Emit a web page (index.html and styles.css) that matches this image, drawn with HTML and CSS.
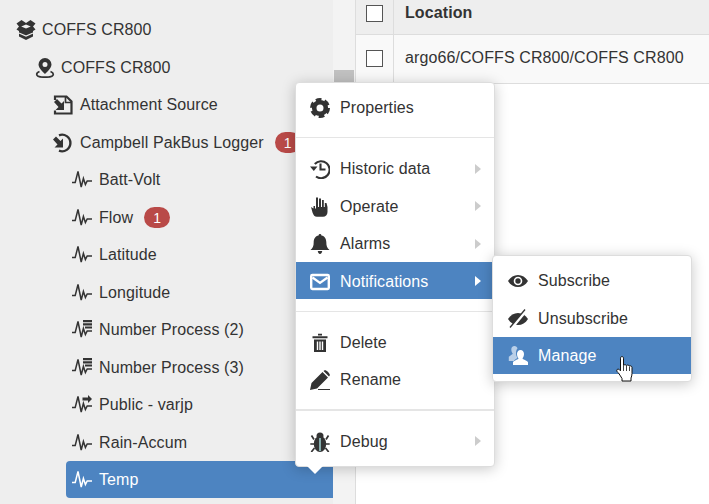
FILE: index.html
```html
<!DOCTYPE html>
<html lang="en">
<head>
<meta charset="utf-8">
<title>Tree</title>
<link rel="stylesheet" href="styles.css">
</head>
<body>
<svg class="defs" width="0" height="0" aria-hidden="true">
  <symbol id="pulse" viewBox="0 0 20 20"><path d="M0 12.500h3.200L6 1.500l3.200 15.500 2.200-8.500 2 6 1.800-3.500H20" fill="none" stroke="currentColor" stroke-width="1.500"/></symbol>
  <symbol id="pulse-list" viewBox="0 0 20 20"><path d="M0 12.500h3.200L6 1.500l3.200 15.500 2.200-8.500 2 6 1.800-3.500H20" fill="none" stroke="currentColor" stroke-width="1.500"/><path d="M11 0h9v2.200h-9zM11 3.200h9v2.200h-9zM13 6.400h7v2h-7z" fill="currentColor"/></symbol>
  <symbol id="pulse-arrow" viewBox="0 0 20 20"><path d="M0 12.500h3.200L6 1.500l3.200 15.500 2.200-8.500 2 6 1.800-3.500H20" fill="none" stroke="currentColor" stroke-width="1.500"/><path d="M10.500 2.500h5.500V0l4 4-4 4V5.500h-5.500z" fill="currentColor"/></symbol>
</svg>
<div class="page">
  <nav class="tree">
    <div class="row lvl0">
      <svg class="ic" viewBox="0 0 20 20"><path d="M10 3 5.500 0 .5 3.500l2.500 3-2.500 3L3 11v5.500l7 3.500 7-3.500V11l2.500-1.500-2.500-3 2.500-3-5-3.500zM10 4.500l4.800 2L10 8.500l-4.800-2z" fill="#333" fill-rule="evenodd"/><path d="M3 13 10 16l7-3" stroke="#eee" stroke-width="1.200" fill="none"/></svg>
      <span>COFFS CR800</span>
    </div>
    <div class="row lvl1">
      <svg class="ic" viewBox="0 0 20 20"><path d="M10 0a6.500 6.500 0 0 0-6.500 6.500c0 4 6.500 9.500 6.500 9.500s6.500-5.500 6.500-9.500A6.500 6.500 0 0 0 10 0zm0 4a2.500 2.500 0 1 1 0 5 2.500 2.500 0 0 1 0-5z" fill="#333" fill-rule="evenodd"/><path d="M4.500 13.500c-2 .8-2.800 1.600-2.800 2.700C1.700 18 5.400 19.200 10 19.200s8.300-1.200 8.300-3c0-1.100-.8-1.900-2.800-2.700" fill="none" stroke="#333" stroke-width="1.700"/></svg>
      <span>COFFS CR800</span>
    </div>
    <div class="row lvl2">
      <svg class="ic" viewBox="0 0 20 20"><path d="M2 5V1.500h11.500l5 5v12H2v-3" fill="none" stroke="#333" stroke-width="2.200"/><path d="M12.500 2v5.500H18" fill="none" stroke="#333" stroke-width="1.700"/><path d="M1 7 4 4l4.500 4.500L11 6v9H2.500L5.500 12z" fill="#333"/></svg>
      <span>Attachment Source</span>
    </div>
    <div class="row lvl2">
      <svg class="ic" viewBox="0 0 20 20"><path d="M6 2.300A8.300 8.300 0 1 1 6 17.700" fill="none" stroke="#333" stroke-width="2.400"/><path d="M0 6.500 3 3.500l4.500 4.500L10 5.500v9H1.500l3-3z" fill="#333"/></svg>
      <span>Campbell PakBus Logger</span>
      <b class="badge">1</b>
    </div>
    <div class="row lvl3"><svg class="ic"><use href="#pulse"/></svg><span>Batt-Volt</span></div>
    <div class="row lvl3"><svg class="ic"><use href="#pulse"/></svg><span>Flow</span><b class="badge">1</b></div>
    <div class="row lvl3"><svg class="ic"><use href="#pulse"/></svg><span>Latitude</span></div>
    <div class="row lvl3"><svg class="ic"><use href="#pulse"/></svg><span>Longitude</span></div>
    <div class="row lvl3"><svg class="ic"><use href="#pulse-list"/></svg><span>Number Process (2)</span></div>
    <div class="row lvl3"><svg class="ic"><use href="#pulse-list"/></svg><span>Number Process (3)</span></div>
    <div class="row lvl3"><svg class="ic"><use href="#pulse-arrow"/></svg><span>Public - varjp</span></div>
    <div class="row lvl3"><svg class="ic"><use href="#pulse"/></svg><span>Rain-Accum</span></div>
    <div class="row lvl3 selected"><svg class="ic"><use href="#pulse"/></svg><span>Temp</span></div>
  </nav>
  <div class="scrollbar"><div class="thumb"></div></div>
  <main class="content">
    <div class="tr head">
      <div class="cell check"><i class="box"></i></div>
      <div class="cell">Location</div>
    </div>
    <div class="tr body">
      <div class="cell check"><i class="box"></i></div>
      <div class="cell">argo66/COFFS CR800/COFFS CR800</div>
    </div>
  </main>
</div>

<div class="menu main-menu">
  <div class="item">
    <svg class="mi" viewBox="0 0 20 20"><circle cx="10" cy="10" r="5.800" fill="none" stroke="#333" stroke-width="4.600"/><circle cx="10" cy="10" r="8.400" fill="none" stroke="#333" stroke-width="3.200" stroke-dasharray="5.600 3.200"/></svg>
    <span>Properties</span>
  </div>
  <hr class="sep">
  <div class="item has-sub">
    <svg class="mi" viewBox="0 0 20 20"><path d="M4.800 5A8.500 8.500 0 1 1 6 17.500" fill="none" stroke="#333" stroke-width="2.100"/><path d="M0 7.500h7.500L3.800 12z" fill="#333"/><path d="M10.500 4.500v6h5" fill="none" stroke="#333" stroke-width="2.100"/></svg>
    <span>Historic data</span>
  </div>
  <div class="item has-sub">
    <svg class="mi" viewBox="0 0 20 20"><path d="M1 10l2.500 1.500V9h1.500v2.500h1V.5h2V10h1V1.500h2V10h1V3h1.800v7h1V6h1.700l1 4V15c0 3-2 4.800-4.500 4.800H7c-2.500 0-3.500-1.500-4.500-4.300z" fill="#333"/></svg>
    <span>Operate</span>
  </div>
  <div class="item has-sub">
    <svg class="mi" viewBox="0 0 20 20"><path d="M10 0c.8 0 1.400.6 1.400 1.400C14.800 2 16.300 5 16.300 8c0 4 .8 6 3.200 8H.5c2.400-2 3.200-4 3.200-8 0-3 1.500-6 4.900-6.600C8.600.6 9.200 0 10 0zM7.800 17h4.400c0 1.500-1 3-2.200 3S7.800 18.500 7.800 17z" fill="#333"/></svg>
    <span>Alarms</span>
  </div>
  <div class="item has-sub active">
    <svg class="mi" viewBox="0 0 20 20"><rect x="1.200" y="3" width="17.600" height="14" rx="1.200" fill="none" stroke="#fff" stroke-width="2.400"/><path d="M2.500 5.500 10 11l7.500-5.500" fill="none" stroke="#fff" stroke-width="2.200"/></svg>
    <span>Notifications</span>
  </div>
  <hr class="sep">
  <div class="item">
    <svg class="mi" viewBox="0 0 20 20"><path d="M2.500 3.300h15v1.900h-15zM8 .8h4v1.600H8zM4 6.500h12V19H4zM6.800 8.500v8.500h1.400V8.500zM9.300 8.500v8.500h1.400V8.500zM11.800 8.500v8.500h1.400V8.500z" fill="#333" fill-rule="evenodd"/></svg>
    <span>Delete</span>
  </div>
  <div class="item">
    <svg class="mi" viewBox="0 0 20 20"><path d="M0 20l1.500-7L12.500 2l5.500 5.500L7 18.500zM13.500 1 15 0c2 .5 4 2.500 5 5l-1 1.500z" fill="#333"/><path d="M8 19h12v1H8z" fill="#333"/></svg>
    <span>Rename</span>
  </div>
  <hr class="sep thick">
  <div class="item has-sub">
    <svg class="mi" viewBox="0 0 20 20"><ellipse cx="10" cy="12" rx="6.200" ry="8" fill="#333"/><circle cx="10" cy="4" r="3.500" fill="#333"/><path d="M10 6v13" stroke="#a8e0e0" stroke-width="1.400"/><path d="M4 7.500 1.500 3.500M16 7.500l2.500-4M4 12H.3M16 12h3.700M4.500 16 1.300 20M15.500 16l3.200 4" stroke="#333" stroke-width="1.700" fill="none"/></svg>
    <span>Debug</span>
  </div>
</div>
<div class="caret"></div>

<div class="menu sub-menu">
  <div class="item">
    <svg class="mi" viewBox="0 0 20 20"><path d="M0 10c2.500-4 6-6 10-6s7.500 2 10 6c-2.500 4-6 6-10 6s-7.500-2-10-6zm10-4.300a4.300 4.300 0 1 0 0 8.600 4.300 4.300 0 0 0 0-8.600z" fill="#333" fill-rule="evenodd"/><circle cx="10" cy="10" r="2.700" fill="#333"/></svg>
    <span>Subscribe</span>
  </div>
  <div class="item">
    <svg class="mi" viewBox="0 0 20 20"><path d="M0 10c2.500-4 6-6 10-6s7.500 2 10 6c-2.500 4-6 6-10 6s-7.500-2-10-6z" fill="#333"/><path d="M18.500 1 3.500 19" stroke="#fff" stroke-width="3"/><path d="M17 .5 2 18.500" stroke="#333" stroke-width="1.300"/></svg>
    <span>Unsubscribe</span>
  </div>
  <div class="item active">
    <svg class="mi" viewBox="0 0 20 20"><path d="M6.500 0C4.500 0 3.300 1.500 3.300 3.500c0 1.500.5 3 1.500 4C4.600 8.500 2 9.500.8 10.800V15h5c.8-1.500 2.700-2.300 3.700-3-1-1.500-1.500-3-1.500-5 0-2 .5-3.500 1.500-4.500C9.300 1 8 0 6.500 0z" fill="#b9cfe8"/><path d="M12.500 4c2.200 0 3.500 1.700 3.500 4 0 1.700-.7 3.300-1.500 4.300 0 1.300 4.500 2 5.500 4V19H5v-2.700c1-2 5.500-2.700 5.500-4C9.700 11.300 9 9.700 9 8c0-2.300 1.300-4 3.500-4z" fill="#fff"/></svg>
    <span>Manage</span>
  </div>
</div>
<svg class="cursor" viewBox="0 0 18 26"><path d="M4.500 2.200C4.500 1 5.500.5 6 .5s1.500.5 1.500 1.700V9.500c.5-1 2.500-1 3 0 .5-.7 2.300-.7 2.700.5.700-.5 2.800-.2 2.800 1.500v6c0 2-.5 3-1 4.500v3H6v-2.500c-1-1.500-2-3.500-3.500-5.500C1.500 16.500.5 15 .8 14c.4-1 1.700-1.200 2.700-.2l1 1z" fill="#fff" stroke="#111" stroke-width="1"/><path d="M7.500 10v5M10.500 10v5M13.500 10.500V15" stroke="#111" stroke-width=".8"/></svg>
</body>
</html>
```
FILE: styles.css
```css
* { box-sizing: border-box; }
html, body { margin: 0; height: 100%; overflow: hidden; background: #fff; }
body { font-family: "Liberation Sans", Arial, sans-serif; font-size: 16px; letter-spacing: .1px; color: #333; position: relative; }
.defs { position: absolute; }
.page { display: flex; height: 504px; }
.tree { width: 333px; flex: none; background: #eee; padding-top: 11.300px; }
.row { display: flex; align-items: center; height: 37.500px; padding-left: 6px; border-radius: 4px 0 0 4px; white-space: nowrap; }
.lvl0 { margin-left: 9px; }
.lvl1 { margin-left: 28px; }
.lvl2 { margin-left: 47px; }
.lvl3 { margin-left: 66px; }
.lvl0 .ic, .lvl1 .ic { margin-left: 1px; margin-right: 6px; }
.ic { width: 20px; height: 20px; flex: none; margin-right: 7px; color: #333; }
.selected { height: 37px; background: #4d84c1; color: #fff; }
.selected .ic { color: #fff; }
.badge { display: inline-flex; align-items: center; justify-content: center; width: 26px; height: 21px; margin-left: 11px; border-radius: 11px; background: #b94a48; color: #fff; font-weight: normal; font-size: 14px; }
.scrollbar { width: 23px; flex: none; background: #f3f3f3; border-right: 1px solid #ddd; padding: 70px 1px 0 1px; }
.thumb { width: 20px; height: 120px; background: #c1c1c1; }
.content { flex: 1; min-width: 0; }
.tr { display: flex; border-bottom: 1px solid #ddd; }
.head { height: 35px; background: #eee; font-weight: bold; }
.body { height: 49px; background: #f9f9f9; }
.cell { display: flex; align-items: center; padding-left: 11px; }
.head .cell { padding-bottom: 9px; }
.body .cell { padding-bottom: 2px; }
.check { width: 38px; flex: none; padding-left: 10px; border-right: 1px solid #ddd; }
.head .check { padding-bottom: 8px; }
.box { display: block; width: 17px; height: 17px; background: #fff; border: 1px solid #555; }
.menu { position: absolute; z-index: 0; width: 200px; background: #fff; border: 1px solid #ddd; border-radius: 4px; box-shadow: 0 2px 14px rgba(0,0,0,.22); }
.main-menu { left: 295px; top: 82px; height: 385px; padding-top: 6.500px; }
.sub-menu { left: 492px; top: 255px; height: 127px; padding-top: 6.500px; }
.item { position: relative; display: flex; align-items: center; height: 37.500px; padding-left: 14px; color: #333; white-space: nowrap; }
.sub-menu .item { padding-left: 15px; }
.mi { width: 20px; height: 20px; flex: none; margin-right: 10px; }
.active { color: #fff; }
.active::before { content: ""; position: absolute; z-index: -1; left: 0; right: 0; top: -.75px; height: 37px; background: #4d84c1; }
.has-sub::after { content: ""; position: absolute; right: 13px; top: 13px; border-style: solid; border-width: 5.500px 0 5.500px 6px; border-color: transparent transparent transparent #ccc; }
.has-sub.active::after { border-left-color: #fff; }
.sep { height: 1px; margin: 10px 0 12.500px; border: 0; background: #e5e5e5; }
.sep.thick { height: 2px; margin: 10px 0 12px; }
.caret { position: absolute; left: 307px; top: 466px; border-style: solid; border-width: 8px 8px 0 8px; border-color: #fff transparent transparent transparent; }
.cursor { position: absolute; left: 615px; top: 356px; width: 20px; height: 26px; }
```
